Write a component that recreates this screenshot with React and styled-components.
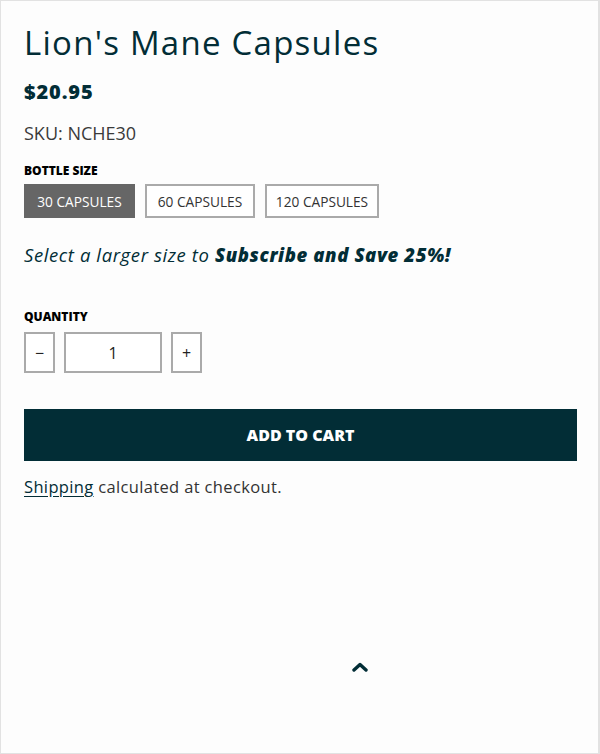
import React, { useState } from 'react';
import styled, { createGlobalStyle } from 'styled-components';

const GlobalStyle = createGlobalStyle`
  html, body {
    margin: 0;
    padding: 0;
    background: #fdfdfd;
  }
  * {
    box-sizing: border-box;
  }
`;

const ink = '#022d36';
const font = `'Open Sans', 'Noto Sans', Arial, sans-serif`;

const Page = styled.div`
  width: 600px;
  height: 754px;
  border: 1px solid #e2e2e2;
  border-right-width: 2px;
  background: #fdfdfd;
  padding: 22px 22px 0 23px;
  font-family: ${font};
  color: ${ink};
  display: flex;
  flex-direction: column;
`;

const Title = styled.h1`
  margin: 0;
  font-size: 33px;
  font-weight: 400;
  line-height: 40px;
  letter-spacing: 1.25px;
`;

const Price = styled.div`
  margin-top: 15px;
  font-size: 20px;
  font-weight: 800;
  line-height: 28px;
  letter-spacing: 0.9px;
`;

const Sku = styled.div`
  margin-top: 14px;
  font-size: 18px;
  line-height: 26px;
  color: #3a3a3a;
`;

const Label = styled.div`
  margin-top: ${(p) => p.$top}px;
  font-size: 12px;
  font-weight: 800;
  line-height: 16px;
  color: #000;
  text-transform: uppercase;
`;

const Options = styled.div`
  display: flex;
  gap: 10px;
  margin-top: 5px;
`;

const Option = styled.button`
  width: ${(p) => p.$width}px;
  height: 34px;
  padding: 0;
  border: 2px solid ${(p) => (p.$active ? '#666' : '#aaa')};
  background: ${(p) => (p.$active ? '#666' : '#fff')};
  color: ${(p) => (p.$active ? '#fff' : '#333')};
  font-family: ${font};
  font-size: 13.7px;
  cursor: pointer;
  border-radius: 0;
`;

const Promo = styled.p`
  margin: 23px 0 0;
  font-size: 18.5px;
  font-style: italic;
  line-height: 28px;
  letter-spacing: 0.6px;
  color: ${ink};

  strong {
    font-weight: 800;
  }
`;

const Qty = styled.div`
  display: flex;
  gap: 9px;
  margin-top: 7px;
`;

const QtyButton = styled.button`
  width: 31px;
  height: 41px;
  padding: 0;
  border: 2px solid #aaa;
  background: #fff;
  color: #222;
  font-family: ${font};
  font-size: 16px;
  cursor: pointer;
  border-radius: 0;
`;

const QtyInput = styled.input`
  width: 98px;
  height: 41px;
  border: 2px solid #aaa;
  background: #fff;
  text-align: center;
  font-family: ${font};
  font-size: 16px;
  color: #222;
  outline: none;
  border-radius: 0;
`;

const CartButton = styled.button`
  margin-top: 36px;
  height: 52px;
  width: 553px;
  border: none;
  background: ${ink};
  color: #fff;
  font-family: ${font};
  font-size: 16px;
  font-weight: 800;
  cursor: pointer;
`;

const Note = styled.p`
  margin: 14px 0 0;
  font-size: 16.5px;
  line-height: 24px;
  letter-spacing: 0.35px;
  color: #333;

  a {
    color: ${ink};
    text-decoration: underline;
    text-underline-offset: 3px;
  }
`;

const TopLink = styled.div`
  margin-top: 163px;
  display: flex;
  justify-content: center;
  padding-left: 120px;
`;

const Chevron = () => (
  <svg width="16" height="10" viewBox="0 0 16 10">
    <path d="M2 8 L8 2.5 L14 8" fill="none" stroke={ink} strokeWidth="3.4" strokeLinecap="round" strokeLinejoin="round" />
  </svg>
);

const sizes = [
  { label: '30 CAPSULES', width: 111 },
  { label: '60 CAPSULES', width: 110 },
  { label: '120 CAPSULES', width: 114 },
];

export default function App() {
  const [size, setSize] = useState(0);
  const [qty, setQty] = useState(1);

  return (
    <>
      <GlobalStyle />
      <Page>
        <Title>Lion's Mane Capsules</Title>
        <Price>$20.95</Price>
        <Sku>SKU: NCHE30</Sku>
        <Label $top={17}>Bottle Size</Label>
        <Options>
          {sizes.map((s, i) => (
            <Option key={s.label} $width={s.width} $active={i === size} onClick={() => setSize(i)}>
              {s.label}
            </Option>
          ))}
        </Options>
        <Promo>
          Select a larger size to <strong>Subscribe and Save 25%!</strong>
        </Promo>
        <Label $top={40}>Quantity</Label>
        <Qty>
          <QtyButton onClick={() => setQty(Math.max(1, qty - 1))}>−</QtyButton>
          <QtyInput value={qty} onChange={(e) => setQty(e.target.value)} />
          <QtyButton onClick={() => setQty(Number(qty) + 1)}>+</QtyButton>
        </Qty>
        <CartButton>ADD TO CART</CartButton>
        <Note>
          <a href="#shipping">Shipping</a> calculated at checkout.
        </Note>
        <TopLink>
          <Chevron />
        </TopLink>
      </Page>
    </>
  );
}
